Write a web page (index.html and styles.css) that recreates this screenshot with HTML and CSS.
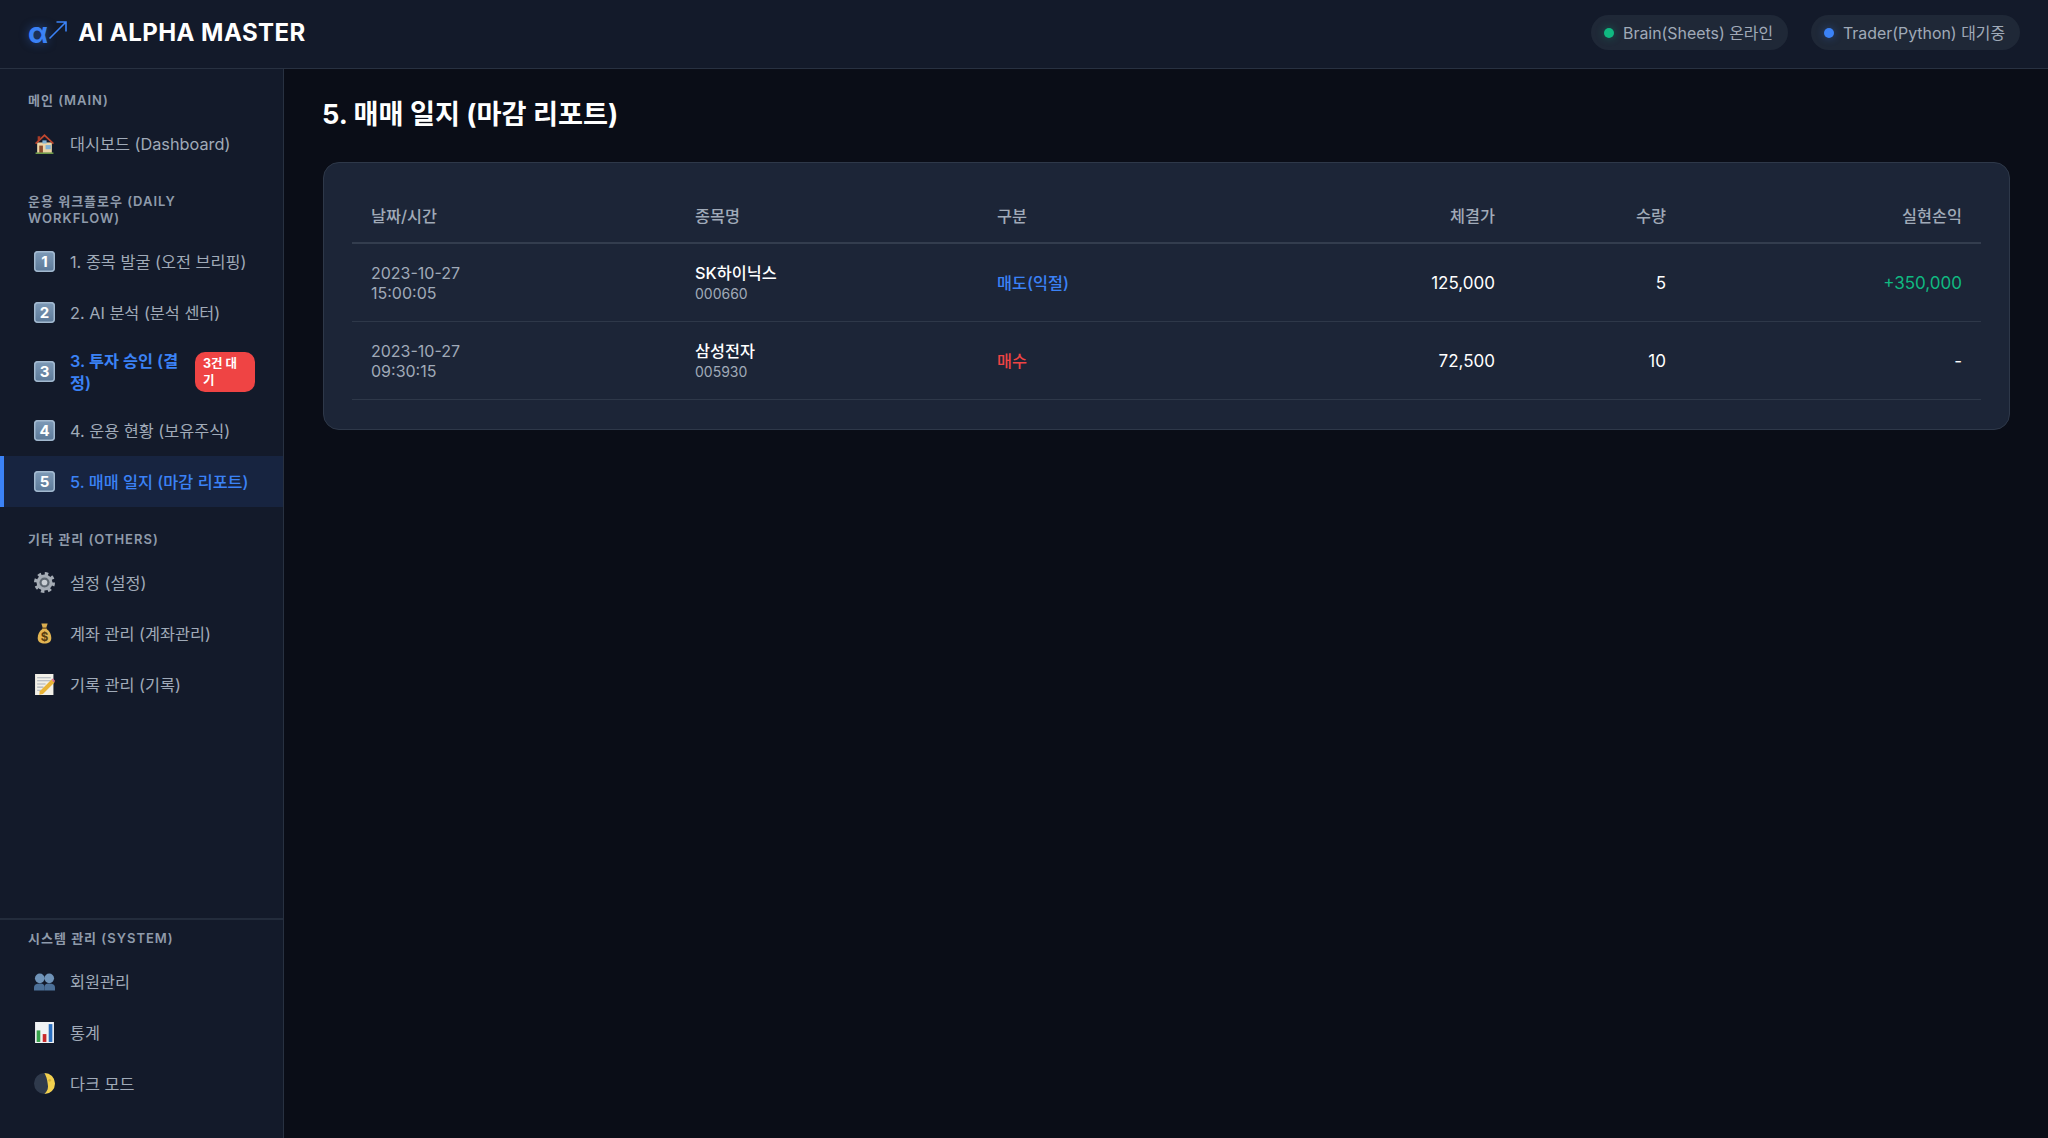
FILE: index.html
```html
<!DOCTYPE html>
<html lang="ko">
<head>
  <meta charset="UTF-8" />
  <meta name="viewport" content="width=device-width, initial-scale=1.0" />
  <title>AI Alpha Master</title>
  <link rel="stylesheet" href="styles.css">
</head>
<body>
  <header class="topbar">
    <div class="brand">
      <span class="brand-mark">α<svg class="brand-arrow" viewBox="0 0 20 20"><path d="M1.500 18.500 18 2M8.500 2H18v9.500" /></svg></span>
      <span class="brand-name">AI ALPHA MASTER</span>
    </div>
    <div class="status-list">
      <div class="status-pill"><span class="dot dot-green"></span>Brain(Sheets) 온라인</div>
      <div class="status-pill"><span class="dot dot-blue"></span>Trader(Python) 대기중</div>
    </div>
  </header>

  <div class="layout">
    <aside class="sidebar">
      <div class="nav-top">
        <div class="nav-label">메인 (MAIN)</div>
        <a class="nav-item">
          <svg class="nav-icon" viewBox="0 0 20 20">
            <path d="M3 9h14v10H3z" fill="#ecd5a6" />
            <path d="M10 1 1 9.500l1 1.200L10 3.400l8 7.300 1-1.200z" fill="#c0472f" />
            <path d="M3.500 3h2.500v2.500L3.500 8z" fill="#a83c28" />
            <path d="M5 12h3.500v7H5z" fill="#8a4a2c" />
            <path d="M11 11.500h5v4h-5z" fill="#7fb2d6" />
            <path d="M8 7h4v3H8z" fill="#7fb2d6" />
            <path d="M1.500 18.500h17V20h-17z" fill="#6f9a4a" />
          </svg>
          <span class="nav-text">대시보드 (Dashboard)</span>
        </a>

        <div class="nav-label">운용 워크플로우 (DAILY WORKFLOW)</div>
        <a class="nav-item"><span class="nav-icon keycap">1</span><span class="nav-text">1. 종목 발굴 (오전 브리핑)</span></a>
        <a class="nav-item"><span class="nav-icon keycap">2</span><span class="nav-text">2. AI 분석 (분석 센터)</span></a>
        <a class="nav-item nav-pending"><span class="nav-icon keycap">3</span><span class="nav-text">3. 투자 승인 (결정)</span><span class="badge">3건 대기</span></a>
        <a class="nav-item"><span class="nav-icon keycap">4</span><span class="nav-text">4. 운용 현황 (보유주식)</span></a>
        <a class="nav-item active"><span class="nav-icon keycap">5</span><span class="nav-text">5. 매매 일지 (마감 리포트)</span></a>

        <div class="nav-label">기타 관리 (OTHERS)</div>
        <a class="nav-item">
          <svg class="nav-icon" viewBox="0 0 20 20">
            <circle cx="10" cy="10" r="8.300" fill="none" stroke="#a5acb5" stroke-width="3.400" stroke-dasharray="3.200 3.320" />
            <circle cx="10" cy="10" r="7.600" fill="#a5acb5" />
            <circle cx="10" cy="10" r="4.800" fill="#5d6670" />
            <circle cx="10" cy="10" r="2.700" fill="#c9ced4" />
          </svg>
          <span class="nav-text">설정 (설정)</span>
        </a>
        <a class="nav-item">
          <svg class="nav-icon" viewBox="0 0 20 20">
            <path d="M7 0.500h6l-1.300 4H8.300z" fill="#dcae4e" />
            <path d="M7.800 4.500h4.400v1.300H7.800z" fill="#8a6424" />
            <path d="M8 5.800h4c3 2 4.500 5.500 4.500 8.500 0 3.700-2.700 5.200-6.500 5.200s-6.500-1.500-6.500-5.200c0-3 1.500-6.500 4.500-8.500z" fill="#e3b552" />
            <text class="bag-sign" x="10" y="17" text-anchor="middle">$</text>
          </svg>
          <span class="nav-text">계좌 관리 (계좌관리)</span>
        </a>
        <a class="nav-item">
          <svg class="nav-icon" viewBox="0 0 20 20">
            <path d="M1 0h17.500v20H1z" fill="#f2f0e8" />
            <path d="M3 3.500h13M3 6.500h13M3 9.500h8M3 12.500h6M3 15.500h4" stroke="#a9afb8" stroke-width="1" />
            <path d="M5.500 16.500 16.500 5.500l3 2.500L8.500 19l-3.500.8z" fill="#e9b437" />
            <path d="M16.500 5.500l1.500-1.300 2 2.300L19.500 8z" fill="#d9708a" />
          </svg>
          <span class="nav-text">기록 관리 (기록)</span>
        </a>
      </div>

      <div class="nav-bottom">
        <div class="nav-label">시스템 관리 (SYSTEM)</div>
        <a class="nav-item">
          <svg class="nav-icon" viewBox="0 0 20 20">
            <circle cx="5.500" cy="7" r="4.600" fill="#6f93b8" />
            <circle cx="14.500" cy="7" r="4.600" fill="#6f93b8" />
            <path d="M0 18.500v-3c0-2 2-3.500 5.500-3.500s4.500 1.500 4.500 3.500v3z" fill="#4c7098" />
            <path d="M10 18.500v-3c0-2 1-3.500 4.500-3.500s5.500 1.500 5.500 3.500v3z" fill="#4c7098" />
          </svg>
          <span class="nav-text">회원관리</span>
        </a>
        <a class="nav-item">
          <svg class="nav-icon" viewBox="0 0 20 20">
            <path d="M1 0h18v20H1z" fill="#f1f3f5" />
            <path d="M2.500 8h3.500v11H2.500z" fill="#36a24a" />
            <path d="M8.300 11.500h3.500V19H8.300z" fill="#c8282a" />
            <path d="M14 2h3.500v17H14z" fill="#2a6fc0" />
          </svg>
          <span class="nav-text">통계</span>
        </a>
        <a class="nav-item">
          <svg class="nav-icon" viewBox="0 0 20 20">
            <circle cx="10" cy="10" r="10" fill="#2f3a4c" />
            <path d="M10 0a10 10 0 0 1 0 20c3-3 4-6 3-10-.4-4-1.500-7-3-10z" fill="#f2d04e" />
            <circle cx="15" cy="7" r="1.300" fill="#d9b53a" />
          </svg>
          <span class="nav-text">다크 모드</span>
        </a>
      </div>
    </aside>

    <main class="content">
      <h1 class="page-title">5. 매매 일지 (마감 리포트)</h1>
      <section class="card">
        <table class="trade-table">
          <thead>
            <tr>
              <th class="col-date">날짜/시간</th>
              <th class="col-name">종목명</th>
              <th class="col-type">구분</th>
              <th class="col-price num">체결가</th>
              <th class="col-qty num">수량</th>
              <th class="col-pnl num">실현손익</th>
            </tr>
          </thead>
          <tbody>
            <tr>
              <td class="time">2023-10-27<br>15:00:05</td>
              <td><div class="stock-name">SK하이닉스</div><div class="stock-code">000660</div></td>
              <td class="sell">매도(익절)</td>
              <td class="num">125,000</td>
              <td class="num">5</td>
              <td class="num profit">+350,000</td>
            </tr>
            <tr>
              <td class="time">2023-10-27<br>09:30:15</td>
              <td><div class="stock-name">삼성전자</div><div class="stock-code">005930</div></td>
              <td class="buy">매수</td>
              <td class="num">72,500</td>
              <td class="num">10</td>
              <td class="num">-</td>
            </tr>
          </tbody>
        </table>
      </section>
    </main>
  </div>
</body>
</html>
```

FILE: styles.css
```css
* {
  box-sizing: border-box;
}

body {
  margin: 0;
  height: 100vh;
  display: flex;
  flex-direction: column;
  overflow: hidden;
  font-family: Inter, "Noto Sans CJK KR", sans-serif;
  background: #0a0d17;
  color: #fff;
}

/* top bar */
.topbar {
  height: 69px;
  flex-shrink: 0;
  display: flex;
  align-items: center;
  justify-content: space-between;
  padding: 0 28px 3px 28px;
  background: #131a2a;
  border-bottom: 1px solid #283141;
}

.brand {
  display: flex;
  align-items: center;
  gap: 10px;
}

.brand-mark {
  display: flex;
  align-items: center;
  font-size: 29px;
  font-weight: 700;
  line-height: 1;
  color: #3b82f6;
  text-shadow: 0 0 10px rgba(59, 130, 246, 0.5);
}

.brand-arrow {
  width: 20px;
  height: 20px;
  margin-top: -5px;
  fill: none;
  stroke: #3b82f6;
  stroke-width: 1.6;
}

.brand-name {
  font-size: 24px;
  font-weight: 700;
  letter-spacing: 0.45px;
}

.status-list {
  display: flex;
  gap: 23px;
}

.status-pill {
  height: 35px;
  display: flex;
  align-items: center;
  gap: 9px;
  padding: 0 15px 0 13px;
  border-radius: 18px;
  background: #1f2837;
  font-size: 15.9px;
  color: #a0aab8;
}

.dot {
  width: 10px;
  height: 10px;
  border-radius: 50%;
}

.dot-green {
  background: #10b981;
  box-shadow: 0 0 8px rgba(16, 185, 129, 0.4);
}

.dot-blue {
  background: #3b82f6;
  box-shadow: 0 0 8px rgba(59, 130, 246, 0.4);
}

.layout {
  flex: 1;
  display: flex;
  min-height: 0;
}

/* sidebar */
.sidebar {
  width: 284px;
  flex-shrink: 0;
  display: flex;
  flex-direction: column;
  justify-content: space-between;
  background: #131a2a;
  border-right: 1px solid #283141;
}

.nav-top {
  padding-top: 23px;
}

.nav-bottom {
  padding: 10px 0 29px;
  border-top: 2px solid #232c3c;
}

.nav-label {
  padding: 0 28px;
  margin-bottom: 9px;
  font-size: 13px;
  font-weight: 600;
  line-height: 17px;
  letter-spacing: 1px;
  color: #8f9bab;
}

.nav-item + .nav-label {
  margin-top: 24px;
}

.nav-item {
  min-height: 51px;
  display: flex;
  align-items: center;
  gap: 15px;
  padding: 12px 28px 12px 34px;
  font-size: 16.3px;
  line-height: 22px;
  color: #a0aab8;
}

.nav-item.active {
  padding-left: 30px;
  border-left: 4px solid #3b82f6;
  background: #172440;
  color: #3b82f6;
  font-weight: 500;
}

.nav-pending {
  padding-top: 11.5px;
  padding-bottom: 11.5px;
  color: #3b82f6;
  font-weight: 600;
}

.nav-icon {
  width: 21px;
  height: 21px;
  flex-shrink: 0;
}

.keycap {
  display: flex;
  align-items: center;
  justify-content: center;
  border-radius: 4px;
  background: linear-gradient(#7f9bb8, #5b7897);
  box-shadow: inset 0 0 0 1.5px #a3b9cf;
  font-size: 15px;
  font-weight: 700;
  line-height: 1;
  color: #fff;
}

.bag-sign {
  font-size: 11px;
  font-weight: 700;
  fill: #5a3d10;
}

.badge {
  width: 60px;
  flex-shrink: 0;
  padding: 3px 8px;
  border-radius: 10px;
  background: #ef4444;
  font-size: 12.5px;
  font-weight: 700;
  line-height: 17px;
  color: #fff;
}

/* main */
.content {
  flex: 1;
  min-width: 0;
  padding: 24px 38px 0 39px;
}

.page-title {
  margin: 0 0 25px -1px;
  font-size: 27.2px;
  font-weight: 700;
  line-height: 44px;
}

.card {
  padding: 28px 28px 29px;
  border: 1px solid #2e3849;
  border-radius: 16px;
  background: #1c2537;
}

.trade-table {
  width: 100%;
  table-layout: fixed;
  border-collapse: collapse;
  font-size: 17px;
}

.col-date {
  width: 324px;
}

.col-name {
  width: 302px;
}

.col-type {
  width: 302px;
}

.col-price {
  width: 234px;
}

.col-qty {
  width: 171px;
}

.col-pnl {
  width: 296px;
}

.trade-table th {
  height: 52px;
  padding: 0 19px 4px;
  border-bottom: 2px solid #333d4e;
  text-align: left;
  font-size: 16.3px;
  font-weight: 500;
  color: #a0aab8;
}

.trade-table td {
  height: 78px;
  padding: 2px 19px 0;
  border-bottom: 1px solid #2e3849;
  line-height: 20px;
}

.trade-table .num {
  text-align: right;
}

.trade-table .time {
  font-size: 16px;
  color: #a0aab8;
}

.stock-name {
  font-size: 16.3px;
  font-weight: 500;
}

.stock-code {
  margin-top: 1px;
  font-size: 14px;
  color: #a0aab8;
}

.trade-table .sell,
.trade-table .buy {
  font-size: 16.3px;
  font-weight: 500;
}

.trade-table .sell {
  color: #3b82f6;
}

.trade-table .buy {
  color: #ef4444;
}

.trade-table .profit {
  color: #10b981;
}
```
